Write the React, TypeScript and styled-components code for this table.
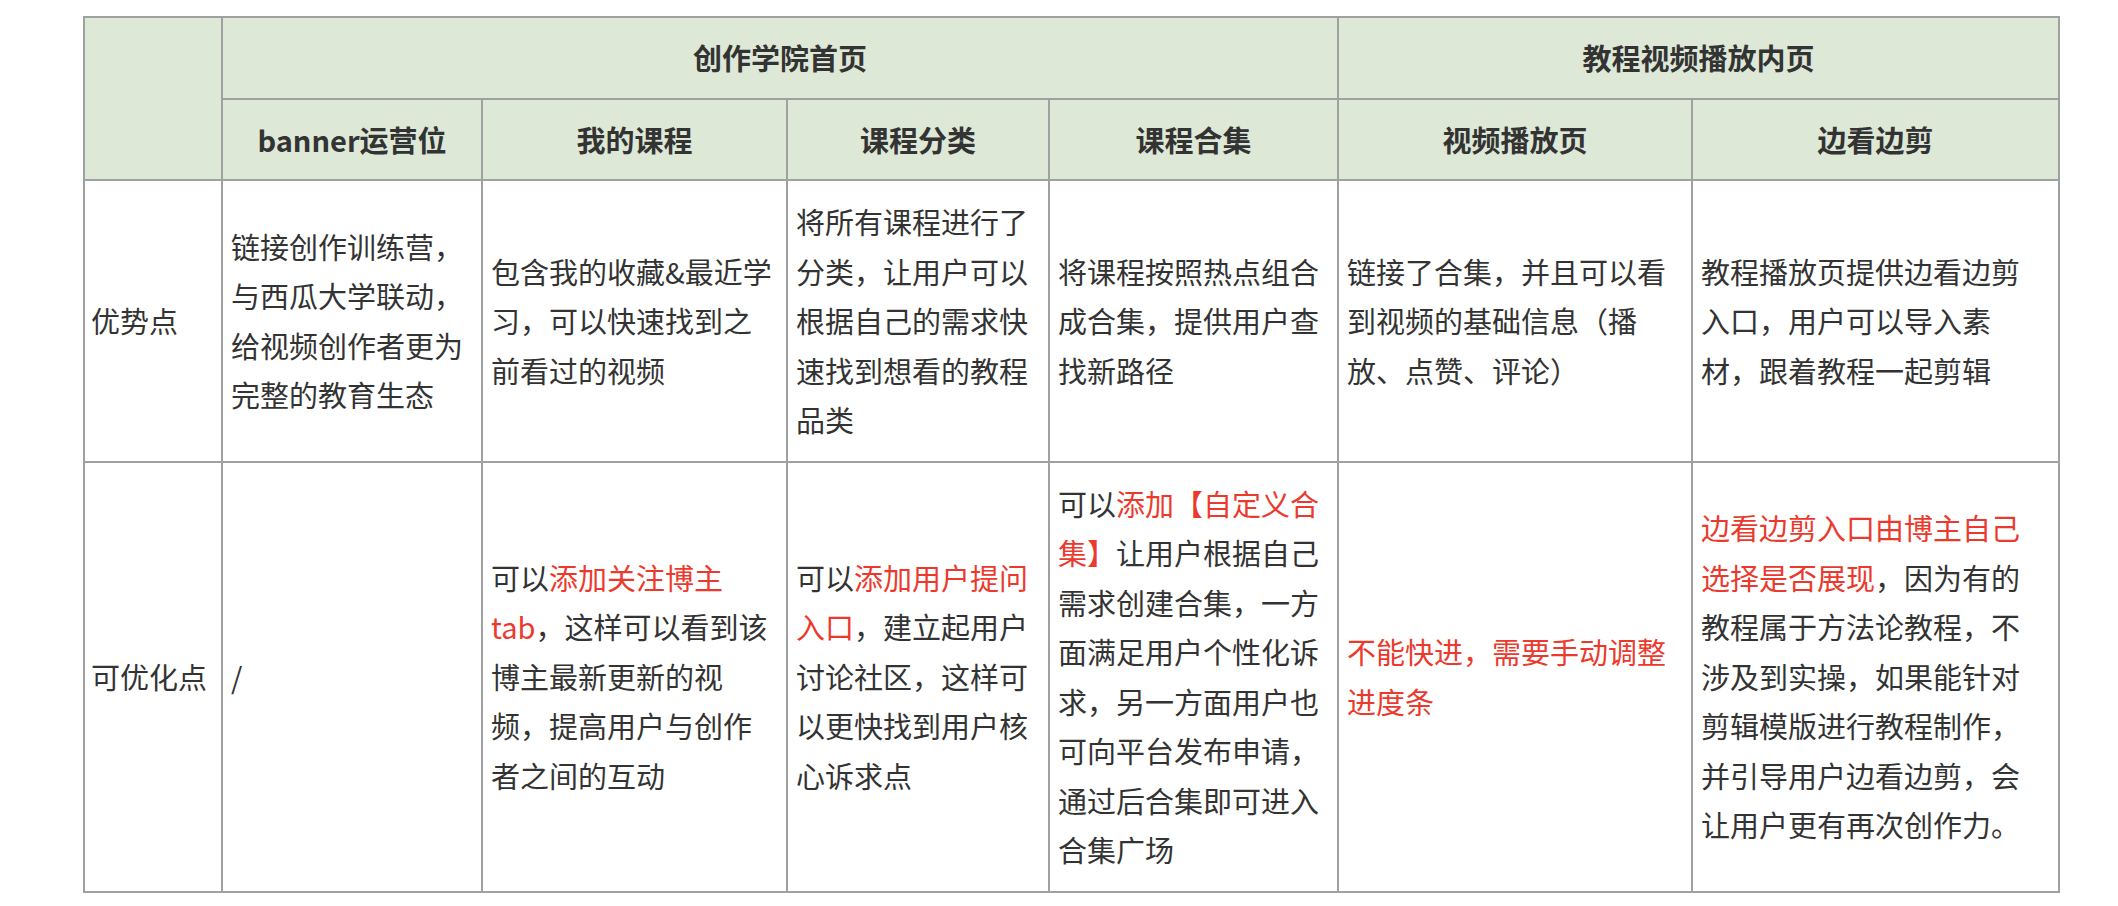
import React from 'react';
import styled, { createGlobalStyle } from 'styled-components';

const GlobalStyle = createGlobalStyle`
  html, body {
    margin: 0;
    padding: 0;
    background: #fff;
  }
  body {
    font-family: "Noto Sans CJK SC", "Noto Sans", sans-serif;
    color: #333;
  }
`;

const Page = styled.div`
  padding: 16px 0 16px 83px;
`;

const Table = styled.table`
  border-collapse: collapse;
  table-layout: fixed;
  width: 1977px;
  font-size: 29px;
  line-height: 49.5px;
  color: #333;
`;

const Col = styled.col<{ $w: number }>`
  width: ${({ $w }) => $w}px;
`;

const HeadCell = styled.th`
  background: #dde8d6;
  border: 2px solid #a0a0a0;
  padding: 15px 8px;
  font-weight: 700;
  text-align: center;
  vertical-align: middle;
`;

const LabelCell = styled.td`
  border: 2px solid #a0a0a0;
  padding: 16px 6px;
  white-space: nowrap;
  vertical-align: middle;
`;

const Cell = styled.td`
  border: 2px solid #a0a0a0;
  padding: 16px 12px 16px 8px;
  vertical-align: middle;
  text-align: left;
`;

const Red = styled.span`
  color: #eb3a2d;
`;

const widths = [138, 260, 305, 262, 289, 354, 367];

const subHeads = ['banner运营位', '我的课程', '课程分类', '课程合集', '视频播放页', '边看边剪'];

const strengths: React.ReactNode[] = [
  '链接创作训练营，与西瓜大学联动，给视频创作者更为完整的教育生态',
  '包含我的收藏&最近学习，可以快速找到之前看过的视频',
  '将所有课程进行了分类，让用户可以根据自己的需求快速找到想看的教程品类',
  '将课程按照热点组合成合集，提供用户查找新路径',
  '链接了合集，并且可以看到视频的基础信息（播放、点赞、评论）',
  '教程播放页提供边看边剪入口，用户可以导入素材，跟着教程一起剪辑',
];

const improvements: React.ReactNode[] = [
  '/',
  <>可以<Red>添加关注博主tab</Red>，这样可以看到该博主最新更新的视频，提高用户与创作者之间的互动</>,
  <>可以<Red>添加用户提问入口</Red>，建立起用户讨论社区，这样可以更快找到用户核心诉求点</>,
  <>可以<Red>添加【自定义合集】</Red>让用户根据自己需求创建合集，一方面满足用户个性化诉求，另一方面用户也可向平台发布申请，通过后合集即可进入合集广场</>,
  <Red>不能快进，需要手动调整进度条</Red>,
  <><Red>边看边剪入口由博主自己选择是否展现</Red>，因为有的教程属于方法论教程，不涉及到实操，如果能针对剪辑模版进行教程制作，并引导用户边看边剪，会让用户更有再次创作力。</>,
];

const App: React.FC = () => {
  return (
    <>
      <GlobalStyle />
      <Page>
        <Table>
          <colgroup>
            {widths.map((w, i) => (
              <Col key={i} $w={w} />
            ))}
          </colgroup>
          <thead>
            <tr>
              <HeadCell rowSpan={2} />
              <HeadCell colSpan={4}>创作学院首页</HeadCell>
              <HeadCell colSpan={2}>教程视频播放内页</HeadCell>
            </tr>
            <tr>
              {subHeads.map((h) => (
                <HeadCell key={h}>{h}</HeadCell>
              ))}
            </tr>
          </thead>
          <tbody>
            <tr>
              <LabelCell>优势点</LabelCell>
              {strengths.map((c, i) => (
                <Cell key={i}>{c}</Cell>
              ))}
            </tr>
            <tr>
              <LabelCell>可优化点</LabelCell>
              {improvements.map((c, i) => (
                <Cell key={i}>{c}</Cell>
              ))}
            </tr>
          </tbody>
        </Table>
      </Page>
    </>
  );
};

export default App;
